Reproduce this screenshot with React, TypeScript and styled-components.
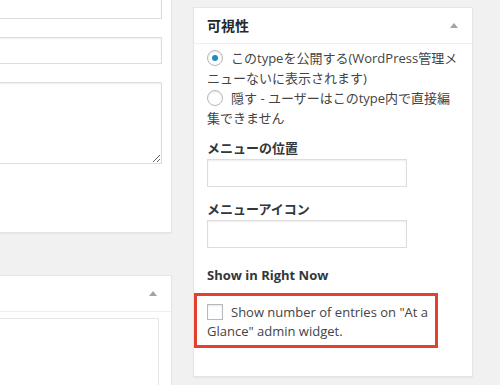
import styled, { createGlobalStyle } from "styled-components";

const GlobalStyle = createGlobalStyle`
  html, body {
    margin: 0;
    padding: 0;
    background: #f1f1f1;
    overflow: hidden;
  }
  body {
    width: 500px;
    height: 385px;
    font-family: "Open Sans", "Noto Sans CJK JP", sans-serif;
    font-size: 13px;
    color: #444;
  }
`;

export default function App() {
  return (
    <>
      <GlobalStyle />
      <Page>
        <MainColumn>
          <Postbox $top={-20}>
            <FieldStack>
              <TextInput type="text" />
              <TextInput type="text" />
              <TextArea />
            </FieldStack>
          </Postbox>
          <Postbox $top={42}>
            <BoxHeader>
              <span />
              <Toggle />
            </BoxHeader>
            <BoxInside $pad="6px 12px 0 0">
              <OuterField />
            </BoxInside>
          </Postbox>
        </MainColumn>

        <SideColumn>
          <Postbox $top={7}>
            <BoxHeader>
              <BoxTitle>可視性</BoxTitle>
              <Toggle />
            </BoxHeader>
            <BoxInside $pad="4px 12px 28px 13px">
              <RadioLine>
                <Radio $checked />
                このtypeを公開する(WordPress管理メニューないに表示されます)
              </RadioLine>
              <RadioLine>
                <Radio />
                隠す - ユーザーはこのtype内で直接編集できません
              </RadioLine>

              <FieldLabel $gap={10}>メニューの位置</FieldLabel>
              <SmallInput type="text" />

              <FieldLabel $gap={12}>メニューアイコン</FieldLabel>
              <SmallInput type="text" />

              <FieldLabel $gap={17}>Show in Right Now</FieldLabel>
              <Highlight>
                <CheckLine>
                  <Checkbox />
                  Show number of entries on "At a Glance" admin widget.
                </CheckLine>
              </Highlight>
            </BoxInside>
          </Postbox>
        </SideColumn>
      </Page>
    </>
  );
}

const Page = styled.div`
  display: flex;
  align-items: flex-start;
  gap: 21px;
  margin-left: -300px;
`;

const MainColumn = styled.div`
  width: 472px;
  display: flex;
  flex-direction: column;
`;

const SideColumn = styled.div`
  width: 280px;
`;

const Postbox = styled.div<{ $top: number }>`
  margin-top: ${(p) => p.$top}px;
  background: #fff;
  border: 1px solid #e5e5e5;
  box-shadow: 0 1px 1px rgba(0, 0, 0, 0.04);
  box-sizing: border-box;
`;

const FieldStack = styled.div`
  display: flex;
  flex-direction: column;
  gap: 18px;
  padding: 11px 9px 68px 0;
`;

const TextInput = styled.input`
  display: block;
  width: 100%;
  height: 27px;
  box-sizing: border-box;
  border: 1px solid #ddd;
  box-shadow: inset 0 1px 2px rgba(0, 0, 0, 0.07);
  background: #fff;
  outline: none;
`;

const TextArea = styled.textarea`
  display: block;
  width: 100%;
  height: 82px;
  box-sizing: border-box;
  border: 1px solid #ddd;
  box-shadow: inset 0 1px 2px rgba(0, 0, 0, 0.07);
  outline: none;
`;

const BoxHeader = styled.div`
  height: 35px;
  display: flex;
  align-items: center;
  justify-content: space-between;
  padding: 0 14px 0 13px;
  border-bottom: 1px solid #eee;
`;

const BoxTitle = styled.h3`
  margin: 0;
  font-size: 14px;
  font-weight: 700;
  color: #23282d;
  line-height: 20px;
`;

const Toggle = styled.span`
  width: 0;
  height: 0;
  border-left: 4px solid transparent;
  border-right: 4px solid transparent;
  border-bottom: 5px solid #a0a5aa;
  margin-top: -1px;
`;

const BoxInside = styled.div<{ $pad: string }>`
  padding: ${(p) => p.$pad};
`;

const OuterField = styled.div`
  height: 90px;
  border: 1px solid #e5e5e5;
  border-left: none;
`;

const RadioLine = styled.label`
  display: block;
  line-height: 20px;
  font-size: 13px;
`;

const Radio = styled.span<{ $checked?: boolean }>`
  display: inline-block;
  position: relative;
  width: 16px;
  height: 16px;
  box-sizing: border-box;
  border: 1px solid #b4b9be;
  border-radius: 50%;
  box-shadow: inset 0 1px 2px rgba(0, 0, 0, 0.1);
  margin-right: 8px;
  vertical-align: -3px;
  background: #fff;

  &::after {
    content: "";
    display: ${(p) => (p.$checked ? "block" : "none")};
    position: absolute;
    left: 4px;
    top: 4px;
    width: 6px;
    height: 6px;
    border-radius: 50%;
    background: #1e8cbe;
  }
`;

const FieldLabel = styled.div<{ $gap: number }>`
  margin-top: ${(p) => p.$gap}px;
  font-weight: 700;
  line-height: 20px;
  color: #32373c;
`;

const SmallInput = styled(TextInput)`
  width: 200px;
  height: 28px;
  margin-top: 1px;
`;

const Highlight = styled.div`
  margin: 8px 0 0 -13px;
  width: 244px;
  box-sizing: border-box;
  border: 3px solid #e4402f;
  padding: 7px 4px 4px 10px;
`;

const CheckLine = styled.label`
  display: block;
  line-height: 19px;
`;

const Checkbox = styled.span`
  display: inline-block;
  width: 16px;
  height: 16px;
  box-sizing: border-box;
  border: 1px solid #b4b9be;
  box-shadow: inset 0 1px 2px rgba(0, 0, 0, 0.1);
  margin-right: 8px;
  vertical-align: -3px;
`;
